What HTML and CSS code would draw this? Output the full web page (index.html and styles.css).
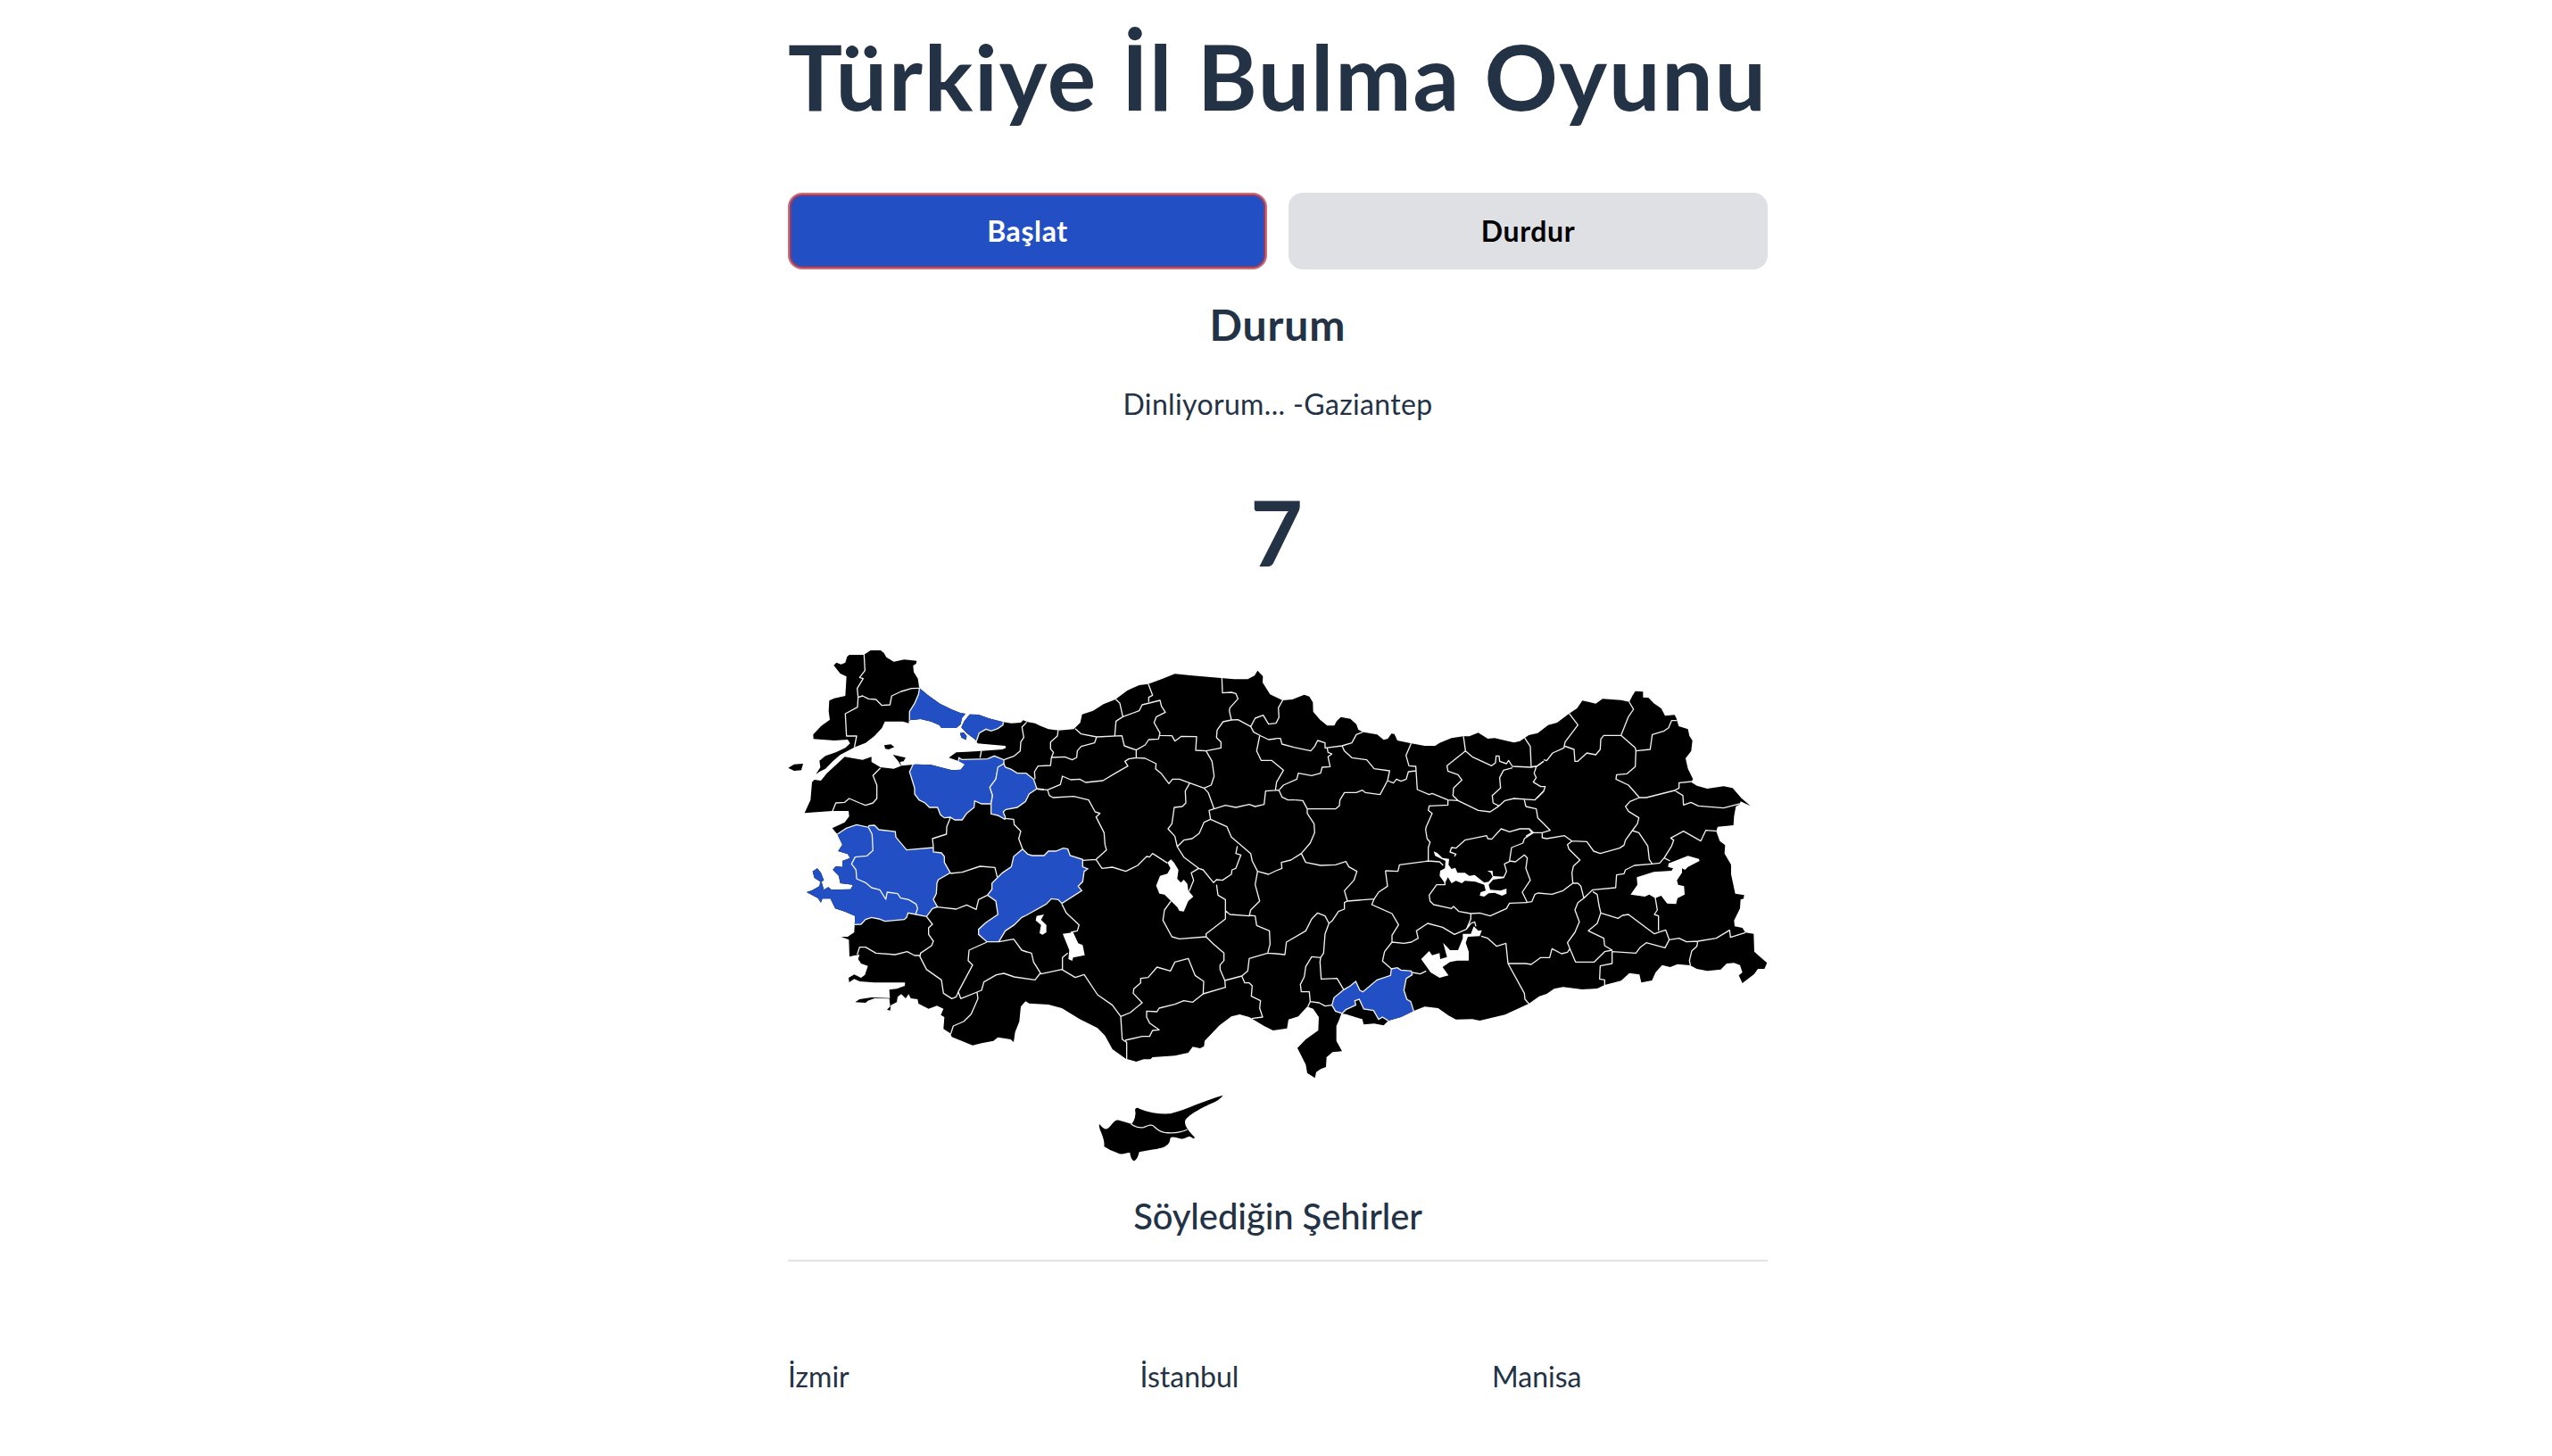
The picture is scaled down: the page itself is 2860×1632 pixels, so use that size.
FILE: index.html
```
<!DOCTYPE html>
<html lang="tr">
<head>
<meta charset="utf-8">
<title>Türkiye İl Bulma Oyunu</title>
<link rel="stylesheet" href="styles.css">
</head>
<body>
<main class="game">
  <h1 class="title">Türkiye İl Bulma Oyunu</h1>
  <div class="actions">
    <button class="btn btn-start">Başlat</button>
    <button class="btn btn-stop">Durdur</button>
  </div>
  <h2 class="status-title">Durum</h2>
  <p class="status">Dinliyorum... -Gaziantep</p>
  <div class="score">7</div>
  <svg class="map" viewBox="39 0 3294 1800" aria-label="Türkiye haritası">
    <defs>
      <clipPath id="land">
        <path d="M193 107L202 98 218 104 232 98 238 78 245 72 295 72 300 68 318 56 350 56 362 66 370 80 395 95 430 88 472 92 470 102 460 108 462 130 476 152 480 180 484 186 510 208 550 236 590 256 620 268 636 270 624 285 620 305 605 318 555 318 548 308 520 296 485 288 448 292 445 302 425 296 365 296 355 318 330 345 300 368 265 382 240 395 215 408 190 430 165 455 145 465 133 474 148 450 145 428 165 412 200 400 232 385 248 370 240 357 195 360 125 355 124 340 150 312 180 290 176 262 178 226 195 218 232 210 236 145 215 135Z"/>
        <path d="M40 452L60 440 90 438 84 460 60 462ZM363 376L385 373 397 382 378 390 366 388ZM392 408L435 418 428 430 416 432 420 446 410 430ZM618 335L630 333 640 345 638 358 622 350Z"/>
        <path d="M650 272L680 273 715 286 762 298 790 302 822 300 830 292 845 298 870 302 885 310 915 322 950 326 1000 322 1022 300 1028 272 1065 260 1100 238 1140 222 1180 192 1220 174 1250 170 1295 154 1340 136 1400 142 1495 150 1540 154 1585 154 1608 142 1618 125 1636 144 1635 165 1660 205 1702 225 1735 222 1775 206 1792 212 1804 232 1805 263 1828 290 1852 310 1876 310 1884 295 1898 281 1930 287 1950 305 1957 324 1975 332 2020 340 2042 358 2056 354 2068 337 2078 338 2088 360 2135 370 2180 378 2215 378 2230 368 2270 352 2310 346 2330 346 2360 334 2392 354 2415 352 2460 362 2480 367 2500 362 2515 352 2530 342 2560 335 2595 308 2625 300 2665 270 2692 252 2710 226 2755 236 2778 220 2840 224 2868 230 2878 210 2888 194 2914 196 2914 215 2932 216 2950 235 2975 252 2988 277 3020 274 3026 285 3034 312 3065 322 3070 345 3080 360 3076 395 3057 420 3065 455 3082 490 3076 500 3095 512 3130 522 3185 514 3215 520 3245 554 3275 580 3242 565 3238 575 3226 582 3220 615 3218 645 3165 650 3160 665 3172 698 3190 712 3188 740 3210 778 3210 810 3224 875 3254 880 3252 892 3242 895 3240 925 3220 965 3222 985 3248 990 3258 1006 3286 1010 3288 1070 3310 1090 3331 1108 3322 1128 3300 1128 3288 1145 3248 1176 3236 1150 3248 1140 3240 1115 3220 1108 3195 1110 3175 1130 3130 1135 3095 1128 3072 1116 3030 1112 3005 1122 2978 1115 2956 1140 2944 1167 2908 1174 2902 1147 2868 1142 2840 1168 2785 1182 2760 1194 2710 1197 2645 1189 2615 1195 2590 1212 2565 1220 2530 1245 2450 1282 2365 1302 2340 1297 2285 1298 2260 1285 2225 1260 2180 1255 2142 1270 2100 1290 2058 1302 2042 1318 2010 1312 1975 1315 1970 1297 1915 1280 1900 1278 1892 1300 1883 1320 1883 1370 1902 1405 1870 1408 1850 1425 1848 1458 1830 1465 1815 1475 1811 1495 1785 1478 1780 1450 1752 1394 1780 1365 1822 1335 1824 1290 1805 1262 1785 1255 1755 1288 1722 1298 1717 1328 1670 1335 1640 1320 1590 1290 1558 1281 1530 1288 1490 1318 1440 1370 1438 1388 1425 1395 1400 1390 1385 1410 1340 1420 1265 1425 1258 1432 1235 1432 1210 1440 1175 1430 1130 1398 1105 1352 1080 1327 1020 1297 960 1260 915 1248 850 1244 838 1237 822 1255 817 1305 803 1340 798 1374 788 1365 745 1358 730 1370 690 1378 660 1385 635 1375 590 1357 585 1345 562 1330 565 1290 553 1283 562 1262 540 1252 512 1262 478 1245 475 1230 452 1227 445 1213 435 1227 420 1213 408 1222 405 1240 385 1250 383 1268 372 1265 383 1255 380 1228 330 1227 308 1235 300 1242 265 1240 280 1230 320 1224 382 1226 380 1198 405 1195 432 1185 433 1174 330 1174 280 1170 262 1162 245 1173 243 1158 262 1147 285 1158 298 1148 308 1118 285 1110 275 1095 280 1080 262 1083 246 1087 244 1030 218 1020 240 1020 262 1005 265 950 230 935 198 925 182 892 155 892 150 905 140 890 102 870 120 864 145 850 148 835 128 822 122 800 138 790 150 805 160 830 152 835 160 862 175 853 185 862 250 860 258 845 215 840 210 815 190 795 200 783 222 785 222 765 248 755 240 742 208 732 222 710 205 675 188 655 230 635 245 615 243 597 188 597 95 604 115 560 120 500 128 492 150 495 170 470 230 415 290 425 320 415 320 432 350 450 395 455 420 445 470 440 520 442 590 460 620 458 634 440 615 430 580 418 605 400 640 398 690 395 760 390 772 385 770 378 735 375 677 370 670 358 640 335 622 316 632 295Z"/>
      </clipPath>
    </defs>
    <g clip-path="url(#land)">
      <rect x="0" y="0" width="3400" height="1520"/>
      <g class="found">
        <path d="M482 180L478 205 465 235 448 262 447 340 600 380 673 362 682 335 705 322 722 328 745 320 762 308 765 285 600 230Z"/>
        <path d="M462 436L448 465 465 520 465 540 480 560 500 570 515 585 542 585 552 610 565 620 585 618 600 627 625 627 640 605 665 585 667 563 690 573 722 573 727 545 718 517 738 490 745 460 765 438 765 425 733 412 710 422 624 424 614 418 612 432 560 430Z"/>
        <path d="M765 438L745 450 738 490 718 517 727 545 722 573 722 607 745 612 768 625 770 618 763 600 772 592 810 585 838 565 850 540 876 522 865 490 840 470 810 470 790 457 770 450Z"/>
        <path d="M205 675L235 655 270 643 310 652 312 646 330 645 345 660 400 666 402 685 438 728 528 720 528 735 555 738 565 750 565 770 585 805 545 828 540 840 538 875 528 895 542 920 525 925 505 952 470 945 443 940 438 955 430 962 365 968 345 960 320 955 300 962 285 978 262 979 180 1000 80 900 90 780 180 770Z"/>
        <path d="M828 725L845 742 860 747 900 747 915 732 940 732 965 722 980 725 988 747 1030 760 1030 785 1047 792 1035 800 1030 835 1015 850 1027 865 960 908 948 895 925 892 908 910 840 948 825 955 800 980 770 1000 748 1037 708 1037 680 1012 680 995 705 972 745 945 738 900 710 880 725 860 725 840 760 805 790 785 798 750Z"/>
        <path transform="translate(1680 720)" d="M388 408L408 404 420 412 455 415 458 428 438 440 430 480 440 510 453 518 463 550 440 590 378 583 358 570 345 578 328 548 295 543 280 510 265 515 268 530 235 545 222 558 200 550 188 530 195 505 228 478 250 465 268 450 282 480 292 485 340 445 385 430Z"/>
      </g>
      <g class="borders">
        <path d="M295 70L298 125 280 148 292 152 272 185 275 215 273 248 232 270 236 345 270 345 262 385M275 215L290 210 310 220 335 222 355 242 382 240 388 210 420 195 455 185 482 184M350 452L325 478 338 510 338 555 325 570 300 578 280 570 245 555 230 568 200 570 188 600M690 392L685 418M765 425L800 412 820 395 822 365 832 350 826 315 842 298M876 522L900 525M768 622L798 625 800 643 822 665 815 690 828 725M585 620L573 650 572 675 525 690 528 718"/>
        <path transform="translate(840 60)" d="M108 262L105 285 82 305 82 328 92 340 85 357 82 384 40 386 28 405 30 430M85 357L130 355 155 365 170 357 172 335 185 320 230 308 237 288 185 278 165 260M237 288L322 284 330 318 370 332 370 358 345 362 332 370 342 386 300 410 258 435 200 441 180 430 150 432 122 420 115 448 72 466 38 464M300 160L315 175 325 220 302 235 298 284M325 220L380 200 390 180 450 165 455 185 468 205 438 220 430 240 450 275 445 295 412 297 400 315 370 332M410 108L425 148 412 155 412 170M450 283L490 284 500 302 522 286 573 287 570 333 605 335 655 325 655 305 640 290 642 265 662 237 690 231 683 200 685 190 712 160 705 142 690 138 660 140 658 88M690 231L712 230 755 253 765 272 790 285M755 253L770 225 797 215 815 245 840 242 850 222 848 190 864 162M790 285L815 297 840 294M785 285L775 335 790 367 825 367 865 400 842 440 838 467M850 467L805 470 800 515 770 522 750 515 705 525 670 518 632 530M850 467L860 490 880 500 905 500M605 335L625 370 632 420 622 450 598 460 612 475 632 530 615 535 620 565M370 358L400 360 437 378 435 395 455 412 480 445 492 430 515 430 550 443 598 460M550 443L535 470 537 510 525 522 498 525 490 580 477 597 500 622 508 657 530 635 558 630 582 612 598 575 620 565 675 590 690 625 755 680 760 705 778 740M72 466L78 485 90 492 160 488 210 500 232 540 248 545 235 557 262 610 265 650 270 668 235 700 190 703M508 657L530 692 580 730 555 745 563 770 548 807M580 730L595 735 630 778 640 768 660 770 690 750 692 735 705 730 722 685 705 680 710 655M778 740L815 750 840 738M235 700L255 730 290 726 335 740 375 720 405 690 415 692 425 680 475 712"/>
        <path transform="translate(1680 60)" d="M0 293L15 293 20 312 60 323 117 335 130 320 140 300 165 308 165 325 222 318 230 335 255 358 305 365 330 395 382 402 375 435M172 325L175 340 188 345 175 355 182 388 155 390 150 410 120 418 75 410 70 430 25 450 10 467M222 318L255 308 270 280 295 270M455 308L437 350 447 385 470 387 475 465 515 482 525 478 578 500 612 502 680 535 720 540 750 520 770 502 800 495 870 500 900 470M375 435L395 443 405 430 420 437 438 430 445 405 470 402M375 435L350 482 300 475 290 467 270 475 230 475 215 500 213 520 200 530 105 530 90 502 65 500M630 284L637 335 575 385 578 403 612 415 625 433 597 460 595 485 612 502M637 335L660 355 725 385 738 375 740 352 750 352 752 370 775 378 782 367 795 387 858 390 880 385 900 370M835 290L855 320 858 390M795 392L765 400 752 425 755 460 727 485 730 510 750 520M105 530L105 545 128 580 130 610 115 645 85 680M578 500L578 517 515 520 512 535 525 545 505 590 503 600 508 630 518 642 512 660 512 705M835 500L840 522M0 738L20 730 18 710 50 702 85 680 100 710 150 720 200 718 235 707 245 725 272 740 262 770 230 805 240 840M368 738L410 740 415 718 500 707 512 705 550 708 562 720M600 690L605 682 585 675 590 660 605 662 635 635 708 620 712 630 725 632 757 597 785 607 820 597 852 597 865 610M865 610L835 630 830 645 792 660 785 705 805 708 835 685 845 695 840 730 855 770 828 810 845 845M785 707L768 715 775 740 765 762"/>
        <path transform="translate(2520 150)" d="M60 275L70 278 90 252 128 235 132 215 175 158 145 118M18 298L35 298 60 280M128 228L162 240 165 280 175 280 205 252 235 258 250 240 252 205 262 193 320 193 345 130 362 105 346 78M320 193L368 235 370 245 418 240 425 190 465 178 480 167 490 143 510 143M370 245L368 298 340 322 305 325 303 340 345 360 382 402 405 402 500 378 515 370 515 352 560 348M35 298L28 320 35 335 25 350 50 365 65 365 60 380 38 403M382 402L350 415 335 432 345 448 380 470 375 490 358 513 335 545 330 562 315 572 250 590 228 582 205 550 155 548 130 530 70 540 55 537 55 520 82 512 60 490 40 470 35 440 0 432M500 378L528 395 530 427 555 418 580 430 665 437 722 422M12 508L20 520 55 520M20 520L0 532M358 513L380 520 410 565 415 610 425 625 365 630 335 645 330 658 305 662 302 705 225 712 195 740 185 700 175 690 158 690 155 655 160 632 182 612 145 575 140 560 155 548M425 625L450 622 465 605 490 565 497 545 487 538 530 515 588 548 605 512 645 515M465 605L485 615M158 690L125 715 88 727 40 723 30 728 20 752 5 754"/>
        <path transform="translate(2520 570)" d="M225 298L240 308 246 345 252 370 240 405 210 430 262 455 265 480 290 495 265 500 230 535 167 535 148 490 140 470 165 435 180 400 165 360 175 335 195 320M252 370L310 388 325 378 345 375 432 440 470 427 482 460 468 487 405 470 385 485 370 505 290 500 290 540 250 548 248 592 265 595 265 615M435 318L442 360 432 375 446 380 446 430M482 460L515 455 540 467 578 465 640 455 685 428 688 452 738 436M578 465L575 482 558 497 550 530 554 550M148 490L140 502 120 507 88 490 80 520 50 520 18 543 0 540"/>
        <path transform="translate(1680 720)" d="M240 180L330 173 345 150 375 130 368 78M240 180L230 185 230 207 210 215 190 245 178 255 165 290 160 355 150 370 120 367 100 400 95 435 82 460 85 485 112 485 115 518 105 540M178 255L165 230 140 220 120 240 100 280 35 318 30 360 0 357M150 370L148 385 152 442 205 440 228 478M115 518L145 522 165 533 188 530M330 173L322 192 390 222 412 260 390 295 390 318 365 350 358 382 388 408M390 318L430 322 455 318 478 305 472 280 510 255 560 268 600 292 640 275 655 255 668 250 672 265M458 420L485 425 505 415M568 115L568 125 540 125 515 160 518 180 530 192 590 205 597 198 615 215 655 222 655 240 640 275M655 222L685 220 720 230 775 205 785 187 845 185M690 298L712 305 742 332 773 322 780 390 835 490 837 510 853 528M780 390L840 390"/>
        <path transform="translate(840 720)" d="M120 190L135 220 178 260 172 280 150 285M122 410L122 370 140 355M0 350L18 355 25 385 50 425 120 410 165 437 195 427 240 495 290 530 318 568 323 645 338 655 338 715M318 568L350 555 390 522 360 490 362 475 385 455 385 440 410 437 440 402 485 415 500 385 545 373 568 430 597 450 595 492M333 648L390 635 415 635 425 615 447 613 415 590 405 570 405 550 440 552 447 540 500 527 530 515 560 520 595 492 670 470 668 447 725 432 735 455 750 455 760 465 757 500 788 515 785 540 795 570 758 575M668 447L652 410 652 395 665 380 665 355 630 325 605 300 515 307 490 300 460 245 465 210 487 180M605 300L605 290 670 240 670 175 645 160 640 125M670 212L685 225 750 230 755 210 785 180 770 125 778 80M750 228L770 230 775 262 818 280 820 325 812 355 750 373 745 415 725 432M812 355L840 357"/>
        <path transform="translate(0 600)" d="M310 52L322 75 325 130 305 148 265 152 253 175 268 195 270 225 300 238 320 255 348 262 368 294 373 270 408 275 418 290 445 295 470 310 475 325 468 345M585 207L625 203 685 183 735 187 743 220M710 280L680 295 672 328 640 313 605 327 542 320M505 352L525 378 512 390 512 412 528 435 522 450 485 475 483 487 505 530 555 565 562 610 590 628 605 622 612 605 660 515 645 500 648 465 708 438M748 437L798 428 825 465 842 471M887 543L870 565 800 555 765 543 740 548 698 572 690 600 620 628 612 605M675 608L678 628 655 680 630 705 595 720 586 748M272 480L280 455 300 455 335 475 400 480 440 470 465 483 483 483"/>
      </g>
    </g>
    <g class="lakes">
      <path transform="translate(840 720)" d="M475 50L487 40 497 50 512 75 508 105 520 118 530 108 542 122 545 145 562 165 545 180 530 215 515 213 508 200 465 158 448 155 437 128 450 95 475 88 485 70ZM35 230L60 225 50 243 68 260 68 285 55 293 45 288 50 260 32 245ZM123 290L158 285 175 322 190 328 197 362 158 370 155 381 142 375 145 345Z"/>
      <path transform="translate(1680 720)" d="M530 13L542 18 560 35 582 38 580 58 590 72 603 68 610 85 635 85 650 95 668 92 700 118 715 115 728 98 722 85 710 78 728 78 730 96 768 98 766 103 730 108 715 125 720 142 755 145 775 138 775 155 760 162 735 152 715 154 700 165 685 162 688 150 705 145 700 125 670 115 635 112 625 120 605 112 590 120 578 100 568 120 550 95 552 78 568 70 570 45 535 28ZM628 290L655 290 665 265 680 280 692 278 685 298 645 300 638 320 648 350 648 380 610 380 585 385 560 402 580 430 550 438 520 420 488 375 515 348 525 362 550 355 552 375 575 368 562 320 585 345 612 345 628 305Z"/>
      <path transform="translate(2520 570)" d="M352 308L375 275 373 250 430 232 490 228 495 220 478 215 480 203 545 178 582 188 584 195 545 215 535 225 525 220 525 235 508 260 512 275 532 280 534 308 510 320 505 340 475 338 455 312 435 320 415 308 400 315Z"/>
    </g>
    <g transform="translate(990 1500)">
      <path d="M96 150C108 164 115 168 122 166C135 160 145 132 162 137Q185 143 205 150Q222 125 216 102Q219 90 232 99C265 112 300 117 335 115C390 100 450 70 512 53Q500 70 470 82C435 98 385 125 384 142Q382 160 417 195Q415 203 402 192C390 190 385 201 368 199Q335 188 334 200C332 238 270 232 230 244Q224 272 212 274Q201 268 199 246C180 247 175 256 155 246Q130 238 112 225Q115 210 103 180Q93 158 96 150Z"/>
      <path class="borders" d="M203 150Q225 165 245 161C260 155 272 149 280 158Q298 175 315 178C345 182 370 178 392 168"/>
    </g>
  </svg>
  <h3 class="list-title">Söylediğin Şehirler</h3>
  <div class="cities">
    <span>İzmir</span>
    <span>İstanbul</span>
    <span>Manisa</span>
  </div>
</main>
</body>
</html>
```
FILE: styles.css
```
* { box-sizing: border-box; }
body {
  margin: 0;
  background: #fff;
  color: #233345;
  font-family: Lato, "Liberation Sans", sans-serif;
  overflow: hidden;
}
.game {
  width: 1098px;
  height: 1632px;
  margin-left: 883px;
  display: flex;
  flex-direction: column;
}
h1, h2, h3, p { margin: 0; text-align: center; white-space: nowrap; }
.title {
  height: 216px;
  padding-top: 25px;
  font-size: 102px;
  line-height: 120px;
  font-weight: 700;
  letter-spacing: 1.8px;
}
.actions { display: grid; grid-template-columns: 1fr 1fr; gap: 24px; height: 86px; }
.btn {
  border: 0;
  padding: 0;
  border-radius: 16px;
  font: 700 32px/40px Lato, sans-serif;
  letter-spacing: 0.6px;
  background: #dfe0e4;
  color: #000;
}
.btn-start {
  background: #2250c4;
  color: #fff;
  border: 2px solid #cf6e74;
  box-shadow: inset 0 0 0 2px #893d6c;
}
.status-title { padding-top: 32px; font-size: 48px; line-height: 60px; font-weight: 700; letter-spacing: 0.9px; }
.status { padding-top: 39px; font-size: 32px; line-height: 40px; letter-spacing: 0.35px; }
.score { padding: 63px 3px 0 0; font-size: 102px; line-height: 120px; font-weight: 700; text-align: center; height: 237px; }
.map { width: 1098px; height: 600px; display: block; flex: none; }
.found { fill: #2250c4; stroke: #f2f2f2; stroke-width: 4; }
.borders { fill: none; stroke: #f2f2f2; stroke-width: 4; stroke-linejoin: round; }
.lakes { fill: #fff; }
.list-title {
  height: 104px;
  padding-top: 29px;
  font-size: 40px;
  line-height: 48px;
  font-weight: 500;
  letter-spacing: -0.1px;
  border-bottom: 2px solid #e2e2e2;
}
.cities {
  padding-top: 109px;
  display: grid;
  grid-template-columns: repeat(3, 394.5px);
  font-size: 32px;
  line-height: 40px;
}
```
